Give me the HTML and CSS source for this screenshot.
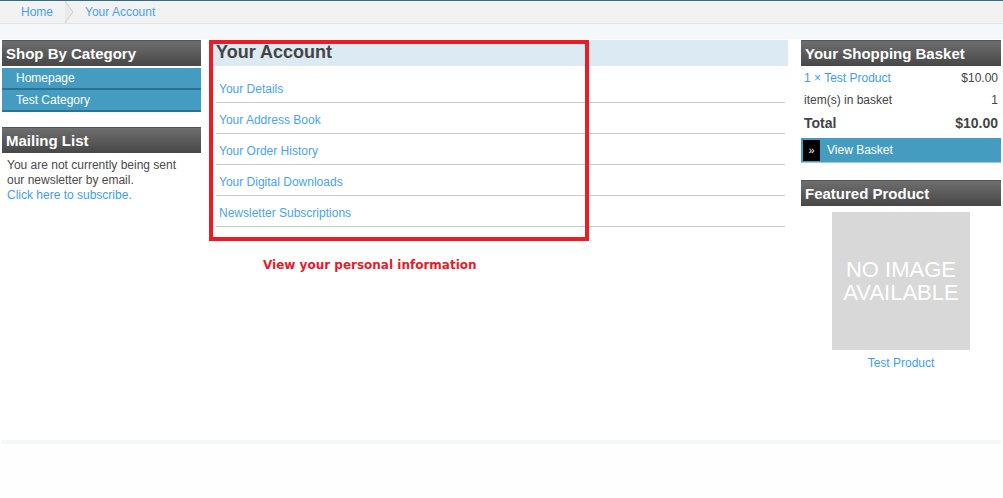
FILE: index.html
```html
<!DOCTYPE html>
<html>
<head>
<meta charset="utf-8">
<link rel="stylesheet" href="styles.css">
</head>
<body>
<div class="topline"></div>
<nav class="crumbs">
  <a class="crumb" href="#">Home</a>
  <svg class="sep" width="22" height="22" viewBox="0 0 22 22"><path d="M2 0 L10 11 L2 22" fill="#eaeaea" stroke="#d0d0d0" stroke-width="1"/></svg>
  <a class="crumb" href="#">Your Account</a>
</nav>
<div class="strip"></div>
<main class="layout">
  <aside class="left">
    <h3 class="box-head">Shop By Category</h3>
    <ul class="cats">
      <li><a href="#">Homepage</a></li>
      <li><a href="#">Test Category</a></li>
    </ul>
    <h3 class="box-head mail-head">Mailing List</h3>
    <p class="mail-text">You are not currently being sent our newsletter by email.<br><a href="#">Click here to subscribe.</a></p>
  </aside>
  <section class="mid">
    <div class="account">
      <h1 class="acc-head">Your Account</h1>
      <ul class="acc-list">
        <li><a href="#">Your Details</a></li>
        <li><a href="#">Your Address Book</a></li>
        <li><a href="#">Your Order History</a></li>
        <li><a href="#">Your Digital Downloads</a></li>
        <li><a href="#">Newsletter Subscriptions</a></li>
      </ul>
      <div class="redbox"></div>
    </div>
    <p class="note">View your personal information</p>
  </section>
  <aside class="right">
    <h3 class="box-head">Your Shopping Basket</h3>
    <div class="row"><a href="#">1 × Test Product</a><span>$10.00</span></div>
    <div class="row"><span>item(s) in basket</span><span>1</span></div>
    <div class="row total"><span>Total</span><span>$10.00</span></div>
    <a class="view-btn" href="#"><span class="arr">»</span>View Basket</a>
    <h3 class="box-head feat-head">Featured Product</h3>
    <div class="noimg"><span>NO IMAGE<br>AVAILABLE</span></div>
    <a class="feat-name" href="#">Test Product</a>
  </aside>
</main>
<div class="footer-line"></div>
</body>
</html>
```
FILE: styles.css
```css
* { box-sizing: border-box; }
html, body { margin: 0; padding: 0; }
body {
  font-family: "Liberation Sans", Arial, sans-serif;
  font-size: 12px;
  color: #444;
  background: #fefefe;
  width: 1003px;
  height: 498px;
  overflow: hidden;
}
a { color: #3d9df0; text-decoration: none; }
.topline { height: 1px; background: #2f6e86; }
.crumbs {
  height: 23px;
  display: flex;
  align-items: center;
  background: #f2f2f2;
  border-bottom: 1px solid #dfe4e8;
}
.crumb { font-size: 12px; color: #4a9ff0; }
.crumbs .crumb:first-child { margin-left: 21px; }
.sep { margin: 0 0 0 10px; }
.strip { height: 15px; background: #f5f8fa; }
.layout {
  display: flex;
  align-items: flex-start;
  padding: 0 2px;
  margin-top: 1px;
  height: 400px;
  background: #fff;
}
.left { width: 199px; }
.mid { width: 578px; margin-left: 9px; }
.right { width: 200px; margin-left: 13px; }
.box-head {
  margin: 0;
  height: 26px;
  line-height: 26px;
  padding-left: 4px;
  color: #fff;
  font-size: 15px;
  font-weight: bold;
  background: linear-gradient(#6e6e6e, #474747);
  border-top: 1px solid #555;
}
.cats { list-style: none; margin: 2px 0 0; padding: 0; }
.cats li {
  background: #449dc1;
  height: 22px;
  border-bottom: 2px solid #2c7391;
  padding-left: 14px;
  line-height: 20px;
}
.cats a { color: #fff; font-size: 12px; }
.mail-head { margin-top: 15px; }
.mail-text { margin: 5px 0 0 5px; width: 182px; line-height: 15px; color: #4a4a4a; }
.account { position: relative; }
.acc-head {
  margin: 0;
  height: 26px;
  line-height: 25px;
  background: #dbeaf3;
  font-size: 18px;
  font-weight: bold;
  color: #444;
  padding-left: 6px;
}
.acc-list { list-style: none; margin: 6px 3px 0 6px; padding: 0; }
.acc-list li {
  height: 31px;
  padding-top: 10px;
  border-bottom: 1px solid #cacaca;
  padding-left: 3px;
  line-height: 14px;
}
.acc-list a { color: #4aa3f3; }
.redbox {
  position: absolute;
  left: -1px;
  top: 0;
  width: 380px;
  height: 201px;
  border: 4px solid #ec1c24;
  pointer-events: none;
}
.note {
  margin: 31px 0 0 53px;
  font-family: "DejaVu Sans", Verdana, sans-serif;
  font-weight: bold;
  font-size: 12px;
  color: #e8192b;
}
.row {
  display: flex;
  justify-content: space-between;
  padding: 0 3px;
  height: 22px;
  line-height: 22px;
}
.row:first-of-type { margin-top: 1px; }
.total { font-weight: bold; font-size: 14px; height: 24px; line-height: 24px; }
.view-btn {
  display: flex;
  align-items: center;
  margin-top: 3px;
  height: 25px;
  background: #449dc1;
  border-bottom: 1px solid #9cc9dc;
  color: #fff;
  font-size: 12px;
}
.arr {
  display: inline-flex;
  align-items: center;
  justify-content: center;
  width: 17px;
  height: 21px;
  background: #000;
  margin: 0 7px 0 2px;
  font-size: 11px;
}
.feat-head { margin-top: 17px; }
.noimg {
  width: 138px;
  height: 138px;
  margin: 6px auto 0;
  background: #d8d8d8;
  display: flex;
  align-items: center;
  justify-content: center;
  text-align: center;
  color: #fff;
  font-size: 22px;
  line-height: 23px;
}
.feat-name { display: block; text-align: center; margin-top: 6px; }
.footer-line {
  height: 4px;
  background: #f3f7fa;
  margin: 0 2px;
}
```
